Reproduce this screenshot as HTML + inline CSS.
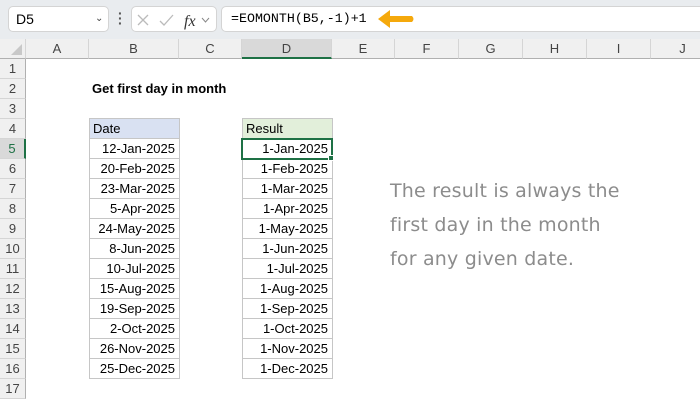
<!DOCTYPE html>
<html><head><meta charset="utf-8"><style>
body{margin:0;width:700px;height:400px;overflow:hidden;background:#fff;font-family:"Liberation Sans",Arial,sans-serif;position:relative}
div{position:absolute;box-sizing:border-box}
.top{left:0;top:0;width:700px;height:39px;background:#e9ecef}
.box{background:#fff;border:1px solid #d4d4d4;border-radius:5px}
.ch{top:39px;height:20px;background:#f0f0f0;border-right:1px solid #d5d5d5;border-bottom:1px solid #b0b0b0;font-size:13px;color:#444;text-align:center;line-height:20px}
.rh{left:0;width:26px;height:20px;background:#f0f0f0;border-bottom:1px solid #d5d5d5;border-right:1px solid #b0b0b0;font-size:13px;color:#444;text-align:center;line-height:20px}
.c{height:21px;width:91px;border:1px solid #c6c6c6;font-size:13px;text-align:right;padding-right:4px;line-height:19px;color:#000}
.note{left:390px;font-family:"DejaVu Sans",sans-serif;font-size:19px;color:#8c8c8c;white-space:nowrap;letter-spacing:0.2px}
</style></head><body>
<div class="top"></div>
<div class="box" style="left:8px;top:6px;width:101px;height:26px;font-size:14px;line-height:24px;padding-left:7px">D5<span style="position:absolute;left:86px;top:0;font-size:10px;color:#444">&#8964;</span></div>
<div style="left:118px;top:11px;width:3px;height:16px;font-size:14px;font-weight:bold;color:#555;line-height:5px">·<br>·<br>·</div>
<div class="box" style="left:131px;top:6px;width:86px;height:26px">
<svg width="86" height="26" style="position:absolute;left:0;top:0"><path d="M6 8l10 10M16 8L6 18" stroke="#bbb" stroke-width="1.3" fill="none"/><path d="M28 14l4 4l9-10" stroke="#bbb" stroke-width="1.3" fill="none"/><text x="52" y="19" font-family="Liberation Serif" font-style="italic" font-size="16" fill="#333">fx</text><path d="M70 11l3.5 4l3.5-4" stroke="#888" fill="none"/></svg></div>
<div class="box" style="left:221px;top:6px;width:490px;height:26px;font-family:'Liberation Mono',monospace;font-size:13.3px;line-height:24px;padding-left:9px">=EOMONTH(B5,-1)+1</div>
<svg width="40" height="20" style="position:absolute;left:376px;top:9px"><path d="M2 10L14 1V7H36Q39 10 36 13H14V19Z" fill="#f5a90c"/></svg>

<div class="ch" style="left:0;width:26px"><svg width="26" height="20"><path d="M22 5V16H11Z" fill="#c8c8c8"/></svg></div>
<div class="ch" style="left:26px;width:63px">A</div>
<div class="ch" style="left:89px;width:90px">B</div>
<div class="ch" style="left:179px;width:63px">C</div>
<div class="ch" style="left:242px;width:90px;background:#d9d9d9;border-bottom:2px solid #1e7145">D</div>
<div class="ch" style="left:332px;width:63px">E</div>
<div class="ch" style="left:395px;width:64px">F</div>
<div class="ch" style="left:459px;width:64px">G</div>
<div class="ch" style="left:523px;width:64px">H</div>
<div class="ch" style="left:587px;width:64px">I</div>
<div class="ch" style="left:651px;width:64px">J</div>

<div class="rh" style="top:59px">1</div>
<div class="rh" style="top:79px">2</div>
<div class="rh" style="top:99px">3</div>
<div class="rh" style="top:119px">4</div>
<div class="rh" style="top:139px;background:#d9d9d9;border-right:2px solid #1e7145;color:#1e7145">5</div>
<div class="rh" style="top:159px">6</div>
<div class="rh" style="top:179px">7</div>
<div class="rh" style="top:199px">8</div>
<div class="rh" style="top:219px">9</div>
<div class="rh" style="top:239px">10</div>
<div class="rh" style="top:259px">11</div>
<div class="rh" style="top:279px">12</div>
<div class="rh" style="top:299px">13</div>
<div class="rh" style="top:319px">14</div>
<div class="rh" style="top:339px">15</div>
<div class="rh" style="top:359px">16</div>
<div class="rh" style="top:379px">17</div>

<div style="left:92px;top:79px;height:20px;line-height:20px;font-size:13px;font-weight:bold">Get first day in month</div>

<div class="c" style="left:89px;top:118px;background:#d9e1f2;text-align:left;padding-left:3px">Date</div>
<div class="c" style="left:242px;top:118px;background:#e2efda;text-align:left;padding-left:3px">Result</div>

<div class="c" style="left:89px;top:138px">12-Jan-2025</div>
<div class="c" style="left:89px;top:158px">20-Feb-2025</div>
<div class="c" style="left:89px;top:178px">23-Mar-2025</div>
<div class="c" style="left:89px;top:198px">5-Apr-2025</div>
<div class="c" style="left:89px;top:218px">24-May-2025</div>
<div class="c" style="left:89px;top:238px">8-Jun-2025</div>
<div class="c" style="left:89px;top:258px">10-Jul-2025</div>
<div class="c" style="left:89px;top:278px">15-Aug-2025</div>
<div class="c" style="left:89px;top:298px">19-Sep-2025</div>
<div class="c" style="left:89px;top:318px">2-Oct-2025</div>
<div class="c" style="left:89px;top:338px">26-Nov-2025</div>
<div class="c" style="left:89px;top:358px">25-Dec-2025</div>

<div class="c" style="left:242px;top:138px">1-Jan-2025</div>
<div class="c" style="left:242px;top:158px">1-Feb-2025</div>
<div class="c" style="left:242px;top:178px">1-Mar-2025</div>
<div class="c" style="left:242px;top:198px">1-Apr-2025</div>
<div class="c" style="left:242px;top:218px">1-May-2025</div>
<div class="c" style="left:242px;top:238px">1-Jun-2025</div>
<div class="c" style="left:242px;top:258px">1-Jul-2025</div>
<div class="c" style="left:242px;top:278px">1-Aug-2025</div>
<div class="c" style="left:242px;top:298px">1-Sep-2025</div>
<div class="c" style="left:242px;top:318px">1-Oct-2025</div>
<div class="c" style="left:242px;top:338px">1-Nov-2025</div>
<div class="c" style="left:242px;top:358px">1-Dec-2025</div>

<div style="left:241px;top:138px;width:92px;height:22px;border:2px solid #1e7145"></div>
<div style="left:328px;top:155px;width:6px;height:6px;background:#1e7145;border:1px solid #fff"></div>

<div class="note" style="top:180px">The result is always the</div>
<div class="note" style="top:214px">first day in the month</div>
<div class="note" style="top:248px">for any given date.</div>
</body></html>
